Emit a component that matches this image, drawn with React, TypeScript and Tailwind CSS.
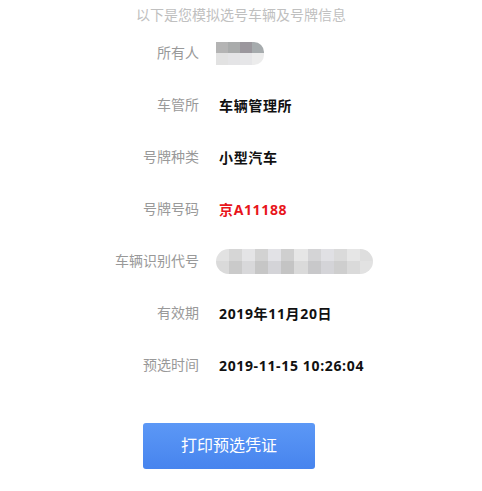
const ownerTop = ["#b4b4b4", "#a9abab", "#9b979d", "#a6abad"];
const ownerBottom = ["#e2e2e2", "#e4e4e6", "#e6e6e8", "#ececec"];

const vinTop = ["#e2e2e2", "#d6d6d6", "#e4e4e6", "#d2d2d2", "#e2e2e6", "#cfcfcf", "#e6e6e6", "#d4d4d6", "#e0e0e4", "#dadada", "#e6e6e6", "#dedede"];
const vinBottom = ["#dadada", "#cacaca", "#d8d8da", "#c6c6c6", "#d4d4d8", "#c4c4c4", "#dadada", "#c8c8ca", "#d4d4d8", "#cecece", "#dadada", "#e2e2e2"];

const Blur = ({ top, bottom, className }: { top: string[]; bottom: string[]; className: string }) => (
  <div className={`flex flex-col overflow-hidden ${className}`}>
    <div className="flex flex-1">
      {top.map((c, i) => (
        <div key={i} className="flex-1" style={{ backgroundColor: c }} />
      ))}
    </div>
    <div className="flex flex-1">
      {bottom.map((c, i) => (
        <div key={i} className="flex-1" style={{ backgroundColor: c }} />
      ))}
    </div>
  </div>
);

const Row = ({ label, children }: { label: string; children: React.ReactNode }) => (
  <div className="flex h-[52px] items-center gap-5">
    <div className="w-[199px] text-right text-[14px] text-[#999999]">{label}</div>
    <div
      className="flex items-center text-[14px] font-bold tracking-[0.65px] text-[#111111]"
      style={{ fontFamily: '"Open Sans", "Noto Sans CJK SC", sans-serif' }}
    >
      {children}
    </div>
  </div>
);

export default function App() {
  return (
    <div
      className="h-[491px] w-[482px] bg-white"
      style={{ fontFamily: '"Liberation Sans", "Noto Sans CJK SC", sans-serif' }}
    >
      <div className="h-[27px] pt-[5px] text-center text-[14px] leading-5 text-[#c0c0c0]">
        以下是您模拟选号车辆及号牌信息
      </div>
      <Row label="所有人">
        <Blur top={ownerTop} bottom={ownerBottom} className="-ml-[3px] h-[23px] w-[48px] rounded-r-[10px]" />
      </Row>
      <Row label="车管所">车辆管理所</Row>
      <Row label="号牌种类">小型汽车</Row>
      <Row label="号牌号码">
        <span className="text-[#e8151b]">京A11188</span>
      </Row>
      <Row label="车辆识别代号">
        <Blur top={vinTop} bottom={vinBottom} className="-ml-[3px] h-[25px] w-[157px] rounded-full" />
      </Row>
      <Row label="有效期">2019年11月20日</Row>
      <Row label="预选时间">2019-11-15 10:26:04</Row>
      <button className="ml-[143px] mt-8 flex h-[46px] w-[172px] items-center justify-center rounded-[3px] bg-gradient-to-b from-[#5c98f6] to-[#4784ee] text-[16px] text-white">
        打印预选凭证
      </button>
    </div>
  );
}
